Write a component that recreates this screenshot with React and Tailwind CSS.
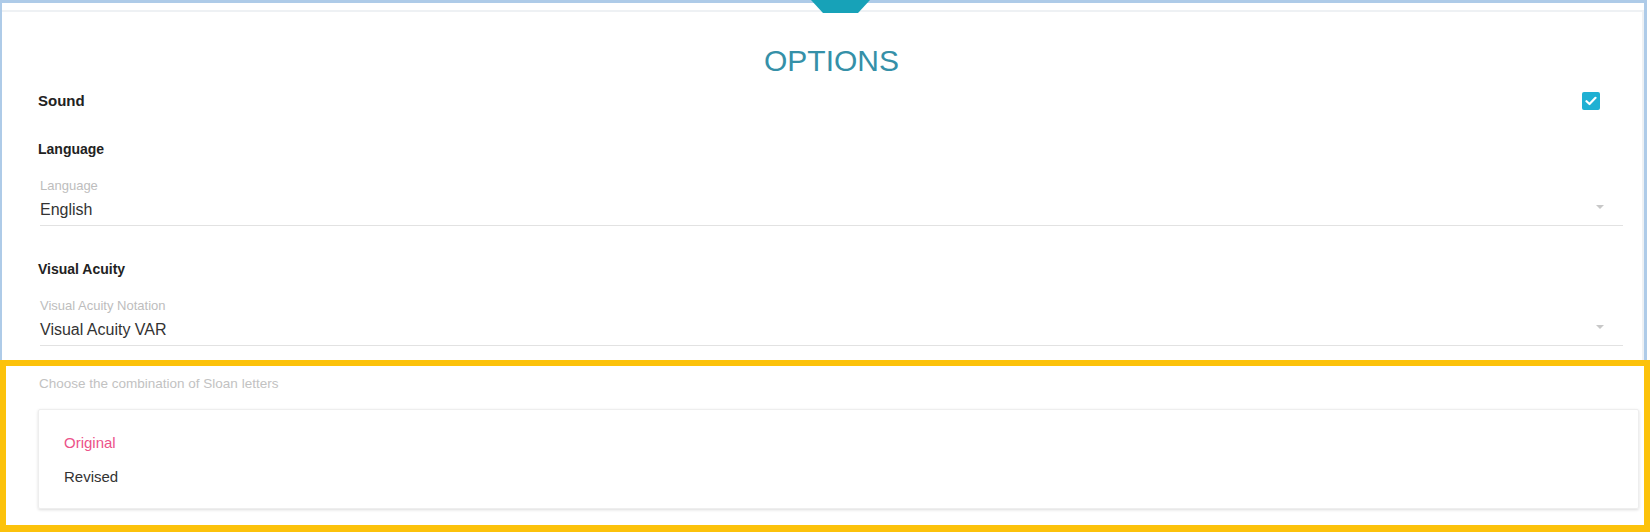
import React from "react";

function Field({ label, value }) {
  return (
    <div className="flex flex-col">
      <div className="text-[13px] leading-[16px] text-[#bdbdbd] mt-[20px]">{label}</div>
      <div className="flex justify-between items-start mt-[6px] h-[20px]">
        <span className="text-[16px] leading-[20px] text-[#333333]">{value}</span>
        <svg width="8" height="4" viewBox="0 0 8 4" className="mt-[5px] mr-[19px]">
          <polygon points="0,0 8,0 4,4" fill="#c8c8c8" />
        </svg>
      </div>
      <div className="mt-[5px] h-px bg-[#e2e2e2]" />
    </div>
  );
}

export default function App() {
  return (
    <div className="w-[1650px] h-[532px] bg-white flex flex-col relative overflow-hidden font-['Liberation_Sans',Arial,sans-serif]">
      <svg width="59" height="13" viewBox="0 0 59 13" className="absolute left-[811px] top-0">
        <polygon points="0,0 59,0 47,13 12,13" fill="#17a2b8" />
      </svg>
      <div className="w-[1647px] h-[360px] shrink-0 border-t-[3px] border-l-2 border-r-[3px] border-[#aecbe8] pt-[7px]">
        <div className="h-full border-t-2 border-r-2 border-[#eef1f4] pl-[38px] pr-[19px] pt-[32px] flex flex-col">
          <h1 className="text-[30px] leading-[34px] text-[#3590a8] text-center">OPTIONS</h1>
          <div className="mt-[13px] h-[20px] flex items-center justify-between">
            <span className="-ml-[2px] text-[15px] leading-[20px] font-bold text-[#222222]">Sound</span>
            <span className="mr-[23px] w-[18px] h-[18px] rounded-[2px] bg-[#1fb0d3] flex items-center justify-center">
              <svg width="12" height="10" viewBox="0 0 12 10">
                <path d="M1.5 5.2 L4.5 8 L10.5 1.8" stroke="white" strokeWidth="2.2" fill="none" strokeLinecap="round" strokeLinejoin="round" />
              </svg>
            </span>
          </div>
          <div className="mt-[29px] -ml-[2px] text-[14px] leading-[18px] font-bold text-[#222222]">Language</div>
          <Field label="Language" value="English" />
          <div className="mt-[34px] -ml-[2px] text-[14px] leading-[18px] font-bold text-[#222222]">Visual Acuity</div>
          <Field label="Visual Acuity Notation" value="Visual Acuity VAR" />
        </div>
      </div>
      <div className="flex-1 border-[6px] border-b-[7px] border-[#fcc20b] flex flex-col pt-[10px]">
        <div className="ml-[33px] text-[13.5px] leading-[16px] text-[#c2c2c2]">Choose the combination of Sloan letters</div>
        <div className="mt-[17px] ml-[32px] mr-[5px] h-[100px] border border-[#eeeeee] rounded-[2px] shadow-[0_1px_3px_rgba(0,0,0,0.14)] pt-[23px] pl-[25px] flex flex-col gap-[14px]">
          <span className="text-[15px] leading-[20px] text-[#ec5289]">Original</span>
          <span className="text-[15px] leading-[20px] text-[#333333]">Revised</span>
        </div>
      </div>
    </div>
  );
}
